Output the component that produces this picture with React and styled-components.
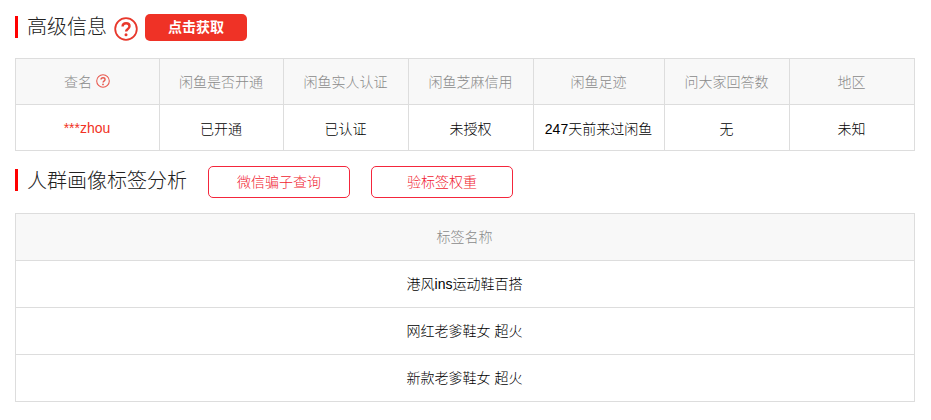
import React from 'react';
import styled, { createGlobalStyle } from 'styled-components';

const GlobalStyle = createGlobalStyle`
  html, body {
    margin: 0;
    padding: 0;
    background: #fff;
  }
  body {
    font-family: "Liberation Sans", Arial, "Noto Sans CJK SC", sans-serif;
    font-size: 14px;
    font-weight: 300;
    color: #000;
  }
`;

const Page = styled.div`
  width: 931px;
  height: 420px;
  padding: 14px 16px 0 15px;
  box-sizing: border-box;
  overflow: hidden;
`;

const Header = styled.div`
  display: flex;
  align-items: flex-start;
  height: ${({ $height }) => $height}px;
`;

const Title = styled.h2`
  margin: ${({ $top }) => $top}px 0 0;
  padding-left: 9px;
  height: 22px;
  line-height: ${({ $line }) => $line}px;
  border-left: 3px solid #f00;
  font-size: 20px;
  font-weight: 300;
  color: #222;
  white-space: nowrap;
`;

const HelpIcon = styled.svg`
  display: block;
  flex: none;
  width: ${({ $size }) => $size}px;
  height: ${({ $size }) => $size}px;
  margin: ${({ $margin }) => $margin};
`;

const FetchButton = styled.button`
  width: 102px;
  height: 27px;
  margin-left: 7px;
  padding: 0 0 3px;
  border: 0;
  border-radius: 5px;
  background: #ef3226;
  color: #fff;
  font: 700 14px "Liberation Sans", Arial, "Noto Sans CJK SC", sans-serif;
`;

const OutlineButton = styled.button`
  width: 142px;
  height: 32px;
  margin-left: ${({ $gap }) => $gap}px;
  padding: 0 0 2px;
  border: 1px solid #f4263c;
  border-radius: 5px;
  background: #fff;
  color: #f01a30;
  font: 300 14px "Liberation Sans", Arial, "Noto Sans CJK SC", sans-serif;
`;

const Table = styled.table`
  width: 900px;
  table-layout: fixed;
  border-collapse: collapse;
  margin-bottom: ${({ $bottom }) => $bottom}px;
`;

const HeadCell = styled.th`
  height: ${({ $height }) => $height}px;
  padding: 0 1px 2px 0;
  box-sizing: content-box;
  border: 1px solid #ddd;
  background: #f8f8f8;
  color: #8a8a8a;
  font-size: 14px;
  font-weight: 300;
  text-align: center;
`;

const Cell = styled.td`
  height: ${({ $height }) => $height}px;
  padding: 0 1px ${({ $lift }) => $lift || 0}px 0;
  border: 1px solid #ddd;
  color: ${({ $accent }) => ($accent ? '#f13225' : '#000')};
  font-size: 14px;
  font-weight: ${({ $accent }) => ($accent ? 400 : 300)};
  text-align: center;
`;

const HeadInner = styled.span`
  display: inline-flex;
  align-items: center;
  gap: 4px;
`;

function Help({ size, margin, stroke }) {
  return (
    <HelpIcon $size={size} $margin={margin} viewBox="0 0 24 24" fill="none">
      <circle cx="12" cy="12" r="10.8" stroke={stroke} strokeWidth="1.8" />
      <path
        d="M8.6 9.6c0-2 1.5-3.3 3.5-3.3s3.4 1.2 3.4 3c0 1.500-.9 2.200-1.900 2.900-1 .7-1.500 1.200-1.500 2.400"
        stroke={stroke}
        strokeWidth="2.400"
      />
      <circle cx="12" cy="17.800" r="1.500" fill={stroke} />
    </HelpIcon>
  );
}

const columns = [144, 124, 125, 125, 131, 125, 125];
const infoHeads = ['闲鱼是否开通', '闲鱼实人认证', '闲鱼芝麻信用', '闲鱼足迹', '问大家回答数', '地区'];
const infoValues = ['已开通', '已认证', '未授权', '247天前来过闲鱼', '无', '未知'];
const tags = ['港风ins运动鞋百搭', '网红老爹鞋女 超火', '新款老爹鞋女 超火'];

export default function App() {
  return (
    <Page>
      <GlobalStyle />
      <Header $height={44}>
        <Title $top={2} $line={22}>高级信息</Title>
        <Help size={24} margin="3px 0 0 7px" stroke="#e8382c" />
        <FetchButton>点击获取</FetchButton>
      </Header>

      <Table $bottom={15}>
        <colgroup>
          {columns.map((width, index) => (
            <col key={index} style={{ width }} />
          ))}
        </colgroup>
        <thead>
          <tr>
            <HeadCell $height={43}>
              <HeadInner>
                查名
                <Help size={14} stroke="#e8584e" />
              </HeadInner>
            </HeadCell>
            {infoHeads.map((head) => (
              <HeadCell key={head} $height={43}>{head}</HeadCell>
            ))}
          </tr>
        </thead>
        <tbody>
          <tr>
            <Cell $accent $height={45}>***zhou</Cell>
            {infoValues.map((value) => (
              <Cell key={value} $height={45}>{value}</Cell>
            ))}
          </tr>
        </tbody>
      </Table>

      <Header $height={47}>
        <Title $top={3} $line={24}>人群画像标签分析</Title>
        <OutlineButton $gap={21}>微信骗子查询</OutlineButton>
        <OutlineButton $gap={21}>验标签权重</OutlineButton>
      </Header>

      <Table>
        <thead>
          <tr>
            <HeadCell $height={44}>标签名称</HeadCell>
          </tr>
        </thead>
        <tbody>
          {tags.map((tag) => (
            <tr key={tag}>
              <Cell $height={44} $lift={2}>{tag}</Cell>
            </tr>
          ))}
        </tbody>
      </Table>
    </Page>
  );
}
